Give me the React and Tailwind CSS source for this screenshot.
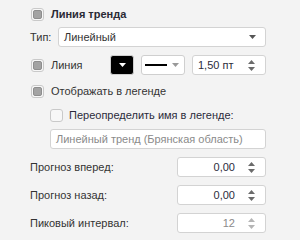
import React from "react";

function Check({ filled = true }) {
  return (
    <div className="w-[13px] h-[13px] rounded-[3px] border border-[#c9c9c9] bg-[#f7f7f7] flex items-center justify-center shrink-0">
      {filled && <div className="w-[9px] h-[9px] rounded-[2px] bg-[#a3a3a3] border border-[#8e8e8e]" />}
    </div>
  );
}

function Caret({ color = "#555" }) {
  return (
    <svg width="7" height="4" viewBox="0 0 7 4" className="shrink-0">
      <path d="M0 0 L7 0 L3.5 4 Z" fill={color} />
    </svg>
  );
}

function Spinner({ color = "#6b6b6b" }) {
  return (
    <svg width="7" height="11" viewBox="0 0 7 11" className="shrink-0">
      <path d="M0 4 L7 4 L3.5 0 Z" fill={color} />
      <path d="M0 7 L7 7 L3.5 11 Z" fill={color} />
    </svg>
  );
}

function NumInput({ value, disabled }) {
  return (
    <div className="ml-auto w-[89px] h-[20px] rounded-[3px] border border-[#d3d3d3] bg-white flex items-center justify-end pr-[10px]">
      <span className={disabled ? "text-[#8a8a8a] mr-[13px]" : "text-[#2b2b3b] mr-[13px]"}>{value}</span>
      <Spinner color={disabled ? "#b5b5b5" : "#6b6b6b"} />
    </div>
  );
}

export default function App() {
  return (
    <div
      className="w-[300px] h-[240px] bg-[#f3f3f3] text-[#333] text-[11px] leading-none pl-[30px] pr-[34px] flex flex-col"
      style={{ fontFamily: "Tahoma, 'Liberation Sans', 'DejaVu Sans', sans-serif" }}
    >
      <div className="mt-[4px] h-[20px] flex items-center pl-[1px]">
        <Check />
        <span className="ml-[7px] font-bold text-[#2a2a35]">Линия тренда</span>
      </div>
      <div className="mt-[3px] h-[20px] flex items-center">
        <span>Тип:</span>
        <div className="ml-auto w-[208px] h-[20px] rounded-[3px] border border-[#d3d3d3] bg-white flex items-center pl-[5px] pr-[9px]">
          <span>Линейный</span>
          <div className="ml-auto"><Caret /></div>
        </div>
      </div>
      <div className="mt-[8px] h-[20px] flex items-center">
        <div className="pl-[1px]"><Check /></div>
        <span className="ml-[7px]">Линия</span>
        <div className="ml-auto w-[24px] h-[20px] rounded-[3px] border border-[#cfcfcf] bg-black flex items-center justify-center">
          <Caret color="#fff" />
        </div>
        <div className="ml-[7px] w-[44px] h-[20px] rounded-[3px] border border-[#cfcfcf] bg-white flex items-center pl-[3px] pr-[5px]">
          <div className="w-[22px] h-[2px] bg-black" />
          <div className="ml-auto"><Caret color="#999" /></div>
        </div>
        <div className="ml-[7px] w-[74px] h-[20px] rounded-[3px] border border-[#d3d3d3] bg-white flex items-center pl-[5px] pr-[10px]">
          <span className="text-[#2b2b3b]">1,50 пт</span>
          <div className="ml-auto"><Spinner /></div>
        </div>
      </div>
      <div className="mt-[6px] h-[20px] flex items-center pl-[1px]">
        <Check />
        <span className="ml-[7px]">Отображать в легенде</span>
      </div>
      <div className="mt-[4px] h-[20px] flex items-center pl-[20px]">
        <Check filled={false} />
        <span className="ml-[6px] text-[#2b2b3b]">Переопределить имя в легенде:</span>
      </div>
      <div className="mt-[4px] h-[20px] ml-[20px] rounded-[3px] border border-[#d3d3d3] bg-white flex items-center pl-[5px]">
        <span className="text-[#8a8a8a]">Линейный тренд (Брянская область)</span>
      </div>
      <div className="mt-[8px] h-[20px] flex items-center">
        <span>Прогноз вперед:</span>
        <NumInput value="0,00" />
      </div>
      <div className="mt-[8px] h-[20px] flex items-center">
        <span>Прогноз назад:</span>
        <NumInput value="0,00" />
      </div>
      <div className="mt-[8px] h-[20px] flex items-center">
        <span>Пиковый интервал:</span>
        <NumInput value="12" disabled />
      </div>
    </div>
  );
}
